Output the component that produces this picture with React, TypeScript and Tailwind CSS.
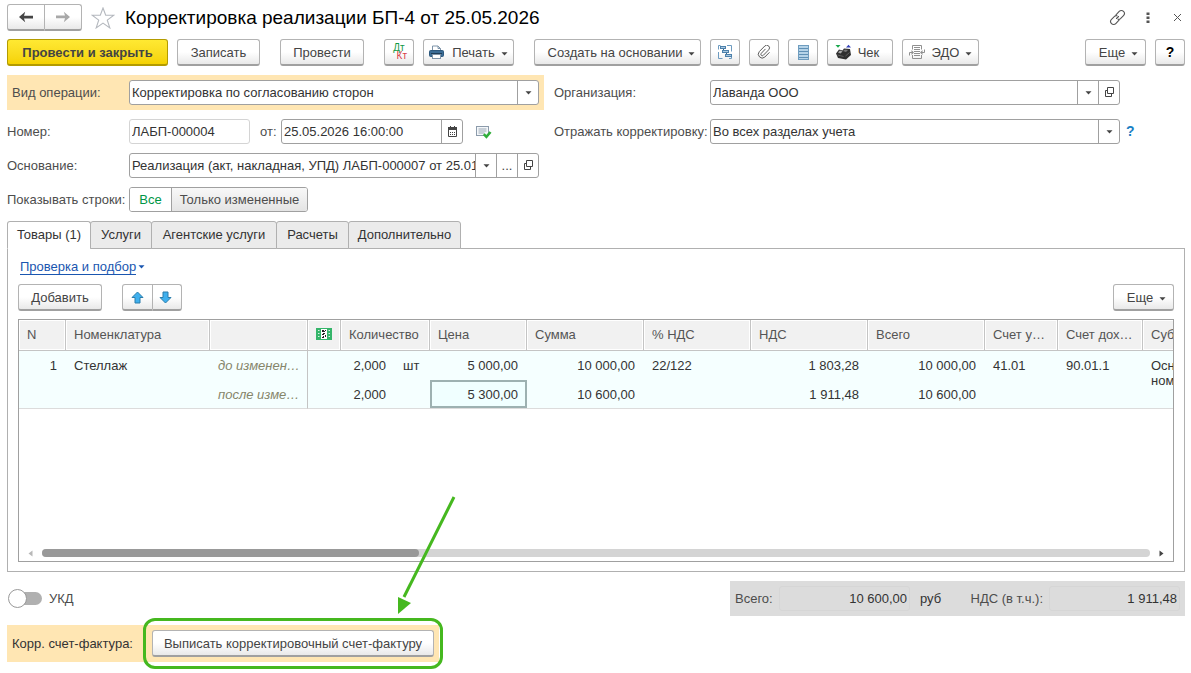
import React, { useState } from 'react';
import clsx from 'clsx';

const BTN =
  'flex h-[27px] shrink-0 items-center justify-center rounded-[3px] border border-[#b3b3b3] border-b-2 border-b-[#a0a0a0] bg-linear-to-b from-white from-50% to-[#e9e9e9] text-[#444] whitespace-nowrap';

const Caret = ({ className = '' }: { className?: string }) => (
  <svg width="7" height="4" viewBox="0 0 7 4" className={clsx('shrink-0', className)} fill="currentColor">
    <path d="M0.5 0.3h6L3.5 3.6z" />
  </svg>
);

const OpenIcon = () => (
  <svg width="11" height="11" viewBox="0 0 11 11" fill="none" stroke="#444">
    <path d="M3.5 0.500h6v6h-6zM3.500 3.500h-2v6h6v-3" />
  </svg>
);

const NavArrow = ({ color, flip }: { color: string; flip?: boolean }) => (
  <svg width="16" height="12" viewBox="0 0 16 12" className={flip ? 'rotate-180' : ''}>
    <path d="M1 6L7.2 0.8 6 4.8h9v2.6H6l1.2 3.8z" fill={color} />
  </svg>
);

const StarIcon = () => (
  <svg width="24" height="22" viewBox="0 0 24 22" fill="none" stroke="#b4b8be" strokeWidth="1.1">
    <path d="M12 1l2.7 7.3h8.1l-6.5 4.8 2.5 7.8-6.8-4.8-6.8 4.8 2.5-7.8L1.2 8.3h8.1z" />
  </svg>
);

const LinkIcon = () => (
  <svg width="17" height="17" viewBox="0 0 17 17" fill="none" stroke="#555" strokeWidth="1.1" strokeLinecap="round">
    <path d="M7 5.8l3.2-3.4a3 3 0 0 1 4.300 0 3 3 0 0 1 0 4.200l-3 3.100a2.600 2.600 0 0 1-2.500.600" />
    <path d="M10 11.200l-3.200 3.400a3 3 0 0 1-4.300 0 3 3 0 0 1 0-4.200l3-3.100a2.600 2.600 0 0 1 2.500-.600" />
    <path d="M7.500 9.500l2-2" />
  </svg>
);

const DtKtIcon = () => (
  <span aria-hidden="true" className="flex w-4 flex-col text-[10px] leading-[8px]">
    <span className="text-[#119944]">Дт</span>
    <span className="text-right text-[#d9414a]">Кт</span>
  </span>
);

const PrinterIcon = () => (
  <svg width="15" height="15" viewBox="0 0 15 15">
    <path d="M3.5 6V1H9l2.5 2.5V6" fill="#fff" stroke="#7d93a8" />
    <path d="M9 1v2.5h2.5" fill="none" stroke="#7d93a8" />
    <rect x="0.5" y="5.5" width="14" height="6" rx="1" fill="#3b6c95" stroke="#2d587d" />
    <path d="M2 8.5h11" stroke="#1f3d57" />
    <rect x="3.5" y="9.5" width="8" height="4" fill="#fff" stroke="#7d93a8" />
  </svg>
);

const StructureIcon = () => (
  <svg width="16" height="16" viewBox="0 0 16 16" fill="none">
    <path d="M3.5 1.5h-2v4M1.500 8v6.500h4M10 1.500h4.500v6M14.500 13v1.500H12" stroke="#6d9bc0" />
    <path d="M6.500 4.500v3M9.500 8.500v3" stroke="#35658e" />
    <rect x="3.500" y="2.500" width="5" height="2" fill="#a9cae4" stroke="#4c80aa" />
    <rect x="5.500" y="6.500" width="6" height="2" fill="#a9cae4" stroke="#4c80aa" />
    <rect x="8.500" y="10.500" width="6" height="2" fill="#a9cae4" stroke="#4c80aa" />
  </svg>
);

const ClipIcon = () => (
  <svg width="14" height="14" viewBox="0 0 14 14" fill="none" stroke="#5c5c5c" strokeLinecap="round">
    <path d="M8.200 4.200L4.300 8.300a1.400 1.400 0 0 0 2 2l5.400-5.500a2.700 2.700 0 0 0-3.900-3.800L2.300 6.600a3.900 3.900 0 0 0 5.500 5.500l4.400-4.500" />
  </svg>
);

const ListIcon = () => (
  <svg width="11" height="15" viewBox="0 0 11 15">
    <rect x="0.5" y="0.5" width="10" height="14" fill="#b5d3e8" stroke="#6f9dbf" />
    <path d="M1 3.5h9M1 6.5h9M1 9.5h9M1 12.5h9" stroke="#5f90b5" />
  </svg>
);

const ReceiptIcon = () => (
  <svg width="17" height="17" viewBox="0 0 17 17">
    <path d="M0.5 1h5L3 3.8z" fill="#19a84c" />
    <path d="M11 3.5h5L13.5 0.8z" fill="#3442b8" />
    <path d="M1 9.500l3-4 3.500 1L9 4.500l6 .5 1 6L11 15.500l-8-1.500z" fill="#303030" />
    <path d="M3 8.500l2-2 2.500 1L5.500 9.500z" fill="#aaa" />
    <path d="M8 7l2-1.500 3 .5-2 2z" fill="#777" />
    <path d="M2.500 11l6 1.500M10.500 12l4-3.500" stroke="#6a6a6a" strokeWidth="0.8" />
  </svg>
);

const EdoIcon = () => (
  <svg width="16" height="16" viewBox="0 0 16 16" fill="none" stroke="#909090">
    <path d="M3.5 5.500v-4h9v4M3.500 11v3.500h9V11" />
    <path d="M5 3.500h6M5 5.500h6M5 7.500h6M5 9.500h6M5 11.500h6" />
    <path d="M3.500 8.500h-3v3M12.500 8.500h3v-3" />
    <path d="M2.500 6L5 8.500 2.500 11zM13.500 6v5L11 8.500z" fill="#909090" stroke="none" />
  </svg>
);

const CalendarIcon = () => (
  <svg width="9" height="11" viewBox="0 0 9 11">
    <path d="M0.5 1.5h8v9h-8z" fill="#fff" stroke="#444" />
    <path d="M0 1h9v3H0zM2 0h1v2H2zM6 0h1v2H6z" fill="#444" />
    <path d="M2 6h1v1H2zM4 6h1v1H4zM6 6h1v1H6zM2 8h1v1H2zM4 8h1v1H4zM6 8h1v1H6z" fill="#444" />
  </svg>
);

const PostedIcon = () => (
  <svg width="16" height="14" viewBox="0 0 16 14" fill="none">
    <rect x="0.5" y="1.5" width="12" height="9" fill="#f4f7fa" stroke="#8c9bab" />
    <path d="M2.5 4h8M2.5 6h8M2.5 8h6" stroke="#9aa7b4" />
    <path d="M7.8 9.2l2.6 2.6L14.5 7" stroke="#2fae3a" strokeWidth="2.6" />
  </svg>
);

const MoveIcon = ({ down }: { down?: boolean }) => (
  <svg width="13" height="13" viewBox="0 0 13 13" className={down ? 'rotate-180' : ''}>
    <path d="M6.5 1L12 6.5H9V12H4V6.5H1z" fill="#3fb0ee" stroke="#2b7dab" strokeLinejoin="round" />
  </svg>
);

const MarkingIcon = () => (
  <svg width="16" height="12" viewBox="0 0 16 12">
    <rect width="16" height="12" fill="#35b56a" />
    <path d="M2 2.5h1.500M2 5.500h1.500M2 8.500h1.500M12.500 2.500H14M12.500 5.500H14M12.500 8.500H14" stroke="#d8f3e2" />
    <rect x="5" y="1" width="6" height="10" fill="#fff" />
    <path d="M6 2h2v1h1v1H7v1h2v1H8v1H6V6h1V4H6zM9 7h1v2H9zM7 8h1v2H6V9h1zM9 2h1v1H9z" fill="#222" />
  </svg>
);

const FIELD = 'relative flex h-[25px] min-w-0 overflow-hidden rounded-[3px] border border-[#a0a0a0] bg-white text-[#333]';
const INPUT = 'min-w-0 flex-1 bg-transparent px-[2px] outline-none';
const SIDE = 'flex w-[21px] shrink-0 items-center justify-center border-l border-[#a0a0a0] text-[#444]';

interface SelectFieldProps {
  id: string;
  value: string;
  className?: string;
  children?: React.ReactNode;
}

const SelectField = ({ id, value, className, children }: SelectFieldProps) => (
  <div className={clsx(FIELD, className)}>
    <div className="relative flex min-w-0 flex-1">
      <select id={id} className="w-full appearance-none bg-transparent px-[2px] outline-none">
        <option>{value}</option>
      </select>
      <span className={clsx(SIDE, 'pointer-events-none absolute inset-y-0 right-0')}>
        <Caret />
      </span>
    </div>
    {children}
  </div>
);

const tabs = [
  { title: 'Товары (1)', width: 'w-[84px]' },
  { title: 'Услуги', width: 'w-[62px]' },
  { title: 'Агентские услуги', width: 'w-[126px]' },
  { title: 'Расчеты', width: 'w-[73px]' },
  { title: 'Дополнительно', width: 'w-[113px]' },
];

const TH = 'h-[31px] truncate border-r border-b border-[#c4c4c4] bg-[#f1f1f1] px-2 pb-[2px] text-left font-normal text-[#555] shadow-[inset_0_0_0_1px_#fff]';
const TD = 'h-[29px] truncate px-2 pt-[7px] align-top leading-[15px]';
const TD_NUM = 'h-[29px] truncate pr-[9px] pl-2 pt-[7px] text-right align-top leading-[15px]';
const TD_STATE = 'h-[29px] truncate border-r border-r-[#c4c4c4] pl-2 pt-[7px] align-top leading-[15px] text-[#85856a] italic';

export default function App() {
  const [tab, setTab] = useState(0);
  const [rows, setRows] = useState('all');

  return (
    <div className="flex min-h-screen flex-col bg-white pt-1 pr-[6px] pb-[11px] pl-[7px] font-['Liberation_Sans',Arial,sans-serif] text-[13px] leading-[15px] text-[#4d4d4d]">
      {/* Заголовок */}
      <header className="flex h-[27px] items-center">
        <div className="flex">
          <button aria-label="Назад" className={clsx(BTN, 'w-[38px] rounded-r-none')}>
            <NavArrow color="#444" />
          </button>
          <button aria-label="Вперед" className={clsx(BTN, 'w-[37px] rounded-l-none border-l-0')}>
            <NavArrow color="#a8a8a8" flip />
          </button>
        </div>
        <button aria-label="В избранное" className="ml-[9px]">
          <StarIcon />
        </button>
        <h1 className="ml-[10px] min-w-0 flex-1 truncate text-[19px] leading-6 text-black">Корректировка реализации БП-4 от 25.05.2026</h1>
        <button aria-label="Получить ссылку" className="mr-5">
          <LinkIcon />
        </button>
        <button aria-label="Дополнительные действия" className="mr-[23px]">
          <svg width="4" height="12" viewBox="0 0 4 12" fill="#555">
            <path d="M0.5 0.5h3V3h-3zM0.5 4.5h3V7h-3zM0.5 8.5h3V11h-3z" />
          </svg>
        </button>
        <button aria-label="Закрыть" className="mr-[3px]">
          <svg width="9" height="9" viewBox="0 0 9 9" stroke="#555">
            <path d="M1 1l7 7M8 1L1 8" />
          </svg>
        </button>
      </header>

      {/* Командная панель */}
      <div className="mt-2 flex items-center gap-[9px]">
        <button className="flex h-[27px] w-[161px] shrink-0 items-center justify-center rounded-[3px] border border-b-2 border-[#b39b00] bg-linear-to-b from-[#ffe932] to-[#f5d200] font-bold text-[#444]">
          Провести и закрыть
        </button>
        <button className={clsx(BTN, 'w-[83px]')}>Записать</button>
        <button className={clsx(BTN, 'ml-[11px] w-[84px]')}>Провести</button>
        <button aria-label="Движения документа" className={clsx(BTN, 'ml-[11px] w-[30px]')}>
          <DtKtIcon />
        </button>
        <button className={clsx(BTN, 'w-[91px]')}>
          <PrinterIcon />
          <span className="mr-[6px] ml-2">Печать</span>
          <Caret className="mt-[3px]" />
        </button>
        <button className={clsx(BTN, 'ml-[11px] w-[167px] pl-2')}>
          <span className="mr-[6px]">Создать на основании</span>
          <Caret className="mt-[3px]" />
        </button>
        <button aria-label="Структура подчиненности" className={clsx(BTN, 'w-[30px]')}>
          <StructureIcon />
        </button>
        <button aria-label="Присоединенные файлы" className={clsx(BTN, 'w-[30px]')}>
          <ClipIcon />
        </button>
        <button aria-label="Список" className={clsx(BTN, 'w-[30px]')}>
          <ListIcon />
        </button>
        <button className={clsx(BTN, 'w-[66px] pr-[6px]')}>
          <ReceiptIcon />
          <span className="ml-[6px]">Чек</span>
        </button>
        <button className={clsx(BTN, 'w-[77px]')}>
          <EdoIcon />
          <span className="mr-[6px] ml-[7px]">ЭДО</span>
          <Caret className="mt-[3px]" />
        </button>
        <button className={clsx(BTN, 'ml-auto w-[61px] pl-[6px]')}>
          <span className="mr-[6px]">Еще</span>
          <Caret className="mt-[3px]" />
        </button>
        <button aria-label="Справка" className={clsx(BTN, 'w-[30px] text-[14px] font-bold text-black')}>
          ?
        </button>
      </div>

      {/* Реквизиты шапки */}
      <div className="mt-[9px] flex gap-[10px]">
        <div className="w-[537px] shrink-0">
          <div className="flex h-[35px] items-center bg-[#ffe6b3] px-[5px]">
            <label htmlFor="operation" className="w-[117px]">Вид операции:</label>
            <SelectField id="operation" value="Корректировка по согласованию сторон" className="flex-1" />
          </div>

          <div className="mt-[9px] flex items-center">
            <label htmlFor="number" className="w-[122px]">Номер:</label>
            <div className={clsx(FIELD, 'w-[121px] border-[#d4d4d4]')}>
              <input id="number" defaultValue="ЛАБП-000004" className={INPUT} />
            </div>
            <label htmlFor="date" className="ml-[10px] w-[21px]">от:</label>
            <div className={clsx(FIELD, 'w-[182px]')}>
              <input id="date" defaultValue="25.05.2026 16:00:00" className={INPUT} />
              <button aria-label="Выбрать дату" className={SIDE}>
                <CalendarIcon />
              </button>
            </div>
            <span className="ml-[13px]">
              <PostedIcon />
            </span>
          </div>

          <div className="mt-[9px] flex items-center pr-[5px]">
            <label htmlFor="basis" className="w-[122px]">Основание:</label>
            <div className={clsx(FIELD, 'flex-1')}>
              <input id="basis" defaultValue="Реализация (акт, накладная, УПД) ЛАБП-000007 от 25.01.2026" className="min-w-0 flex-1 bg-transparent pl-[2px] outline-none" />
              <button aria-label="Выбрать из списка" className={SIDE}>
                <Caret />
              </button>
              <button aria-label="Выбрать" className={SIDE}>...</button>
              <button aria-label="Открыть" className={SIDE}>
                <OpenIcon />
              </button>
            </div>
          </div>

          <div role="radiogroup" aria-labelledby="rows-label" className="mt-[9px] flex items-center">
            <span id="rows-label" className="w-[122px] whitespace-nowrap">Показывать строки:</span>
            <div className="flex h-[25px] overflow-hidden rounded-[3px] border border-[#a0a0a0]">
              <label className={clsx('relative flex w-[42px] items-center justify-center border-r border-[#a0a0a0]', rows === 'all' ? 'bg-white text-[#009646]' : 'bg-[#ececec]')}>
                <input type="radio" name="rows" className="absolute inset-0 appearance-none" checked={rows === 'all'} onChange={() => setRows('all')} />
                Все
              </label>
              <label className={clsx('relative flex w-[135px] items-center justify-center', rows === 'changed' ? 'bg-white text-[#009646]' : 'bg-linear-to-b from-[#f8f8f8] to-[#e4e4e4]')}>
                <input type="radio" name="rows" className="absolute inset-0 appearance-none" checked={rows === 'changed'} onChange={() => setRows('changed')} />
                Только измененные
              </label>
            </div>
          </div>
        </div>

        <div className="min-w-0 flex-1 pt-[5px]">
          <div className="flex items-center pr-[65px]">
            <label htmlFor="company" className="w-[156px] shrink-0">Организация:</label>
            <SelectField id="company" value="Лаванда ООО" className="flex-1">
              <button aria-label="Открыть организацию" className={SIDE}>
                <OpenIcon />
              </button>
            </SelectField>
          </div>
          <div className="mt-[14px] flex items-center">
            <label htmlFor="reflect" className="w-[156px] shrink-0 whitespace-nowrap">Отражать корректировку:</label>
            <SelectField id="reflect" value="Во всех разделах учета" className="flex-1" />
            <button aria-label="Подсказка" className="w-[65px] pl-[6px] text-left text-[14px] font-bold text-[#1a7fc4]">?</button>
          </div>
        </div>
      </div>

      {/* Закладки */}
      <div role="tablist" className="z-10 mt-[9px] -mb-px flex">
        {tabs.map((t, i) => (
          <button
            key={t.title}
            role="tab"
            aria-selected={tab === i}
            onClick={() => setTab(i)}
            className={clsx(
              'h-[28px] rounded-t-[3px] border border-[#b0b0b0] pb-[2px] whitespace-nowrap text-[#333]',
              t.width,
              i > 0 && '-ml-px',
              tab === i ? 'border-b-white bg-white' : 'bg-[#ebebeb]'
            )}
          >
            {t.title}
          </button>
        ))}
      </div>

      <section className="flex flex-1 flex-col border border-[#b0b0b0] px-[10px] pb-[9px]">
        <a href="#check" className="mt-[10px] ml-[2px] flex items-center self-start text-[#1a56b0]">
          <span className="border-b border-[#1a56b0] leading-[15px]">Проверка и подбор</span>
          <Caret className="ml-[2px]" />
        </a>
        <div className="mt-[9px] flex">
          <button className={clsx(BTN, 'w-[84px]')}>Добавить</button>
          <button aria-label="Переместить вверх" className={clsx(BTN, 'ml-5 w-[31px] rounded-r-none')}>
            <MoveIcon />
          </button>
          <button aria-label="Переместить вниз" className={clsx(BTN, 'w-[29px] rounded-l-none border-l-0 pr-[3px]')}>
            <MoveIcon down />
          </button>
          <button className={clsx(BTN, 'ml-auto w-[61px] pl-[6px]')}>
            <span className="mr-[6px]">Еще</span>
            <Caret className="mt-[3px]" />
          </button>
        </div>

        <div className="mt-2 flex min-h-[160px] flex-1 flex-col justify-between overflow-hidden border border-[#a0a0a0]">
          <div className="overflow-hidden">
            <table className="w-[1244px] table-fixed border-separate border-spacing-0 text-[#333]">
              <colgroup>
                <col className="w-[47px]" />
                <col className="w-[144px]" />
                <col className="w-[98px]" />
                <col className="w-[33px]" />
                <col className="w-[54px]" />
                <col className="w-[35px]" />
                <col className="w-[97px]" />
                <col className="w-[117px]" />
                <col className="w-[107px]" />
                <col className="w-[117px]" />
                <col className="w-[117px]" />
                <col className="w-[73px]" />
                <col className="w-[85px]" />
                <col className="w-[120px]" />
              </colgroup>
              <thead>
                <tr>
                  <th className={TH}>N</th>
                  <th className={TH}>Номенклатура</th>
                  <th className={TH} aria-label="Версия строки" />
                  <th className={TH} aria-label="Маркировка">
                    <MarkingIcon />
                  </th>
                  <th className={TH} colSpan={2}>Количество</th>
                  <th className={TH}>Цена</th>
                  <th className={TH}>Сумма</th>
                  <th className={TH}>% НДС</th>
                  <th className={TH}>НДС</th>
                  <th className={TH}>Всего</th>
                  <th className={TH}>Счет у…</th>
                  <th className={TH}>Счет дох…</th>
                  <th className={TH}>Субконто</th>
                </tr>
              </thead>
              <tbody className="bg-[#f5ffff]">
                <tr>
                  <td rowSpan={2} className={clsx(TD_NUM, 'border-b border-[#dcdcdc]')}>1</td>
                  <td rowSpan={2} className={clsx(TD, 'border-b border-[#dcdcdc]')}>Стеллаж</td>
                  <td className={TD_STATE}>до изменен…</td>
                  <td rowSpan={2} className={clsx(TD, 'border-b border-[#dcdcdc]')} />
                  <td className={TD_NUM}>2,000</td>
                  <td className={TD}>шт</td>
                  <td className={TD_NUM}>5 000,00</td>
                  <td className={TD_NUM}>10 000,00</td>
                  <td rowSpan={2} className={clsx(TD, 'border-b border-[#dcdcdc]')}>22/122</td>
                  <td className={TD_NUM}>1 803,28</td>
                  <td className={TD_NUM}>10 000,00</td>
                  <td rowSpan={2} className={clsx(TD, 'border-b border-[#dcdcdc]')}>41.01</td>
                  <td rowSpan={2} className={clsx(TD, 'border-b border-[#dcdcdc]')}>90.01.1</td>
                  <td rowSpan={2} className={clsx(TD, 'border-b border-[#dcdcdc]')}>
                    Основная
                    <br />
                    номенклатурная
                  </td>
                </tr>
                <tr>
                  <td className={clsx(TD_STATE, 'border-b border-b-[#dcdcdc]')}>после изме…</td>
                  <td className={clsx(TD_NUM, 'border-b border-[#dcdcdc]')}>2,000</td>
                  <td className={clsx(TD, 'border-b border-[#dcdcdc]')} />
                  <td className={clsx(TD_NUM, 'border-b border-[#dcdcdc] bg-[#f0ffff] shadow-[inset_0_0_0_2px_#9db1b1]')}>5 300,00</td>
                  <td className={clsx(TD_NUM, 'border-b border-[#dcdcdc]')}>10 600,00</td>
                  <td className={clsx(TD_NUM, 'border-b border-[#dcdcdc]')}>1 911,48</td>
                  <td className={clsx(TD_NUM, 'border-b border-[#dcdcdc]')}>10 600,00</td>
                </tr>
              </tbody>
            </table>
          </div>

          {/* Полоса прокрутки */}
          <div className="flex h-4 items-center px-[9px]">
            <svg width="5" height="7" viewBox="0 0 5 7">
              <path d="M4.5 0.5v6L0.5 3.5z" fill="#b8b8b8" />
            </svg>
            <div className="mx-[9px] h-2 flex-1 rounded-full bg-[#d4d4d4]">
              <div className="h-2 w-[34%] rounded-full bg-[#999]" />
            </div>
            <svg width="5" height="7" viewBox="0 0 5 7">
              <path d="M0.5 0.5v6L4.5 3.5z" fill="#444" />
            </svg>
          </div>
        </div>
      </section>

      {/* Итоги */}
      <div className="mt-[9px] flex items-center justify-between">
        <label className="relative flex items-center">
          <input type="checkbox" className="peer absolute inset-0 appearance-none" />
          <span className="relative ml-[1px] flex h-5 w-[34px] items-center">
            <span className="ml-2 h-[13px] flex-1 rounded-full bg-[#b0b0b0]" />
            <span className="absolute left-0 size-[19px] rounded-full border border-[#999] bg-white" />
          </span>
          <span className="ml-[7px]">УКД</span>
        </label>
        <div className="flex h-[35px] w-[455px] items-center bg-[#dcdcdc] px-[5px]">
          <label htmlFor="total" className="w-[44px]">Всего:</label>
          <input id="total" readOnly value="10 600,00" className="h-[25px] w-[131px] rounded-[3px] border border-[#d6d6d6] px-[2px] text-right text-[#333]" />
          <span className="ml-[10px] text-[#333]">руб</span>
          <label htmlFor="vat" className="mr-[6px] ml-auto">НДС (в т.ч.):</label>
          <input id="vat" readOnly value="1 911,48" className="h-[25px] w-[131px] rounded-[3px] border border-[#d6d6d6] px-[2px] text-right text-[#333]" />
        </div>
      </div>

      {/* Счет-фактура */}
      <div className="mt-[9px] flex h-[37px] items-center self-start bg-[#ffe6b3] px-[5px]">
        <span className="w-[140px] text-[#333]">Корр. счет-фактура:</span>
        <div className="relative">
          <button className={clsx(BTN, 'w-[282px]')}>Выписать корректировочный счет-фактуру</button>
          <div className="pointer-events-none absolute -inset-x-[9px] -inset-y-[12px] rounded-[12px] border-3 border-[#45b81f]" />
          <svg className="pointer-events-none absolute right-[-22px] bottom-[43px]" width="60" height="118" viewBox="0 0 60 118">
            <path d="M58 1L8 101" stroke="#45b81f" strokeWidth="3" />
            <path d="M2 118V101L15 107z" fill="#45b81f" />
          </svg>
        </div>
      </div>
    </div>
  );
}
